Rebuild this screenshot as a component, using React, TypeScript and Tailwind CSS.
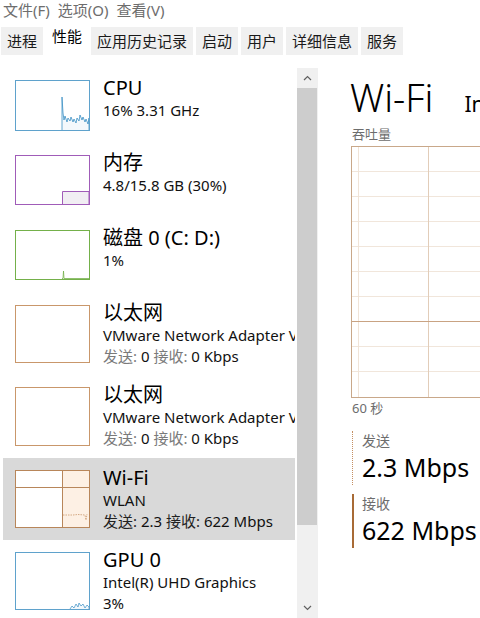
import React from 'react';

type Perf = {
  title: string;
  lines: React.ReactNode[];
  h: number;
  box: string;
  color: string;
  graph: React.ReactNode;
  selected?: boolean;
};

const Label = ({ children, dark }: { children: React.ReactNode; dark?: boolean }) => (
  <span className={dark ? 'text-[#222]' : 'text-[#7a7a7a]'}>{children}</span>
);

// small sparkline box on the left of each resource row
const Thumb = ({ h, color, children }: { h: number; color: string; children?: React.ReactNode }) => (
  <svg width={75} height={h} className="shrink-0 block">
    <rect x={0.5} y={0.5} width={74} height={h - 1} fill="#fff" />
    {children}
    <rect x={0.5} y={0.5} width={74} height={h - 1} fill="none" stroke={color} />
  </svg>
);

const items: Perf[] = [
  {
    title: 'CPU',
    lines: ['16% 3.31 GHz'],
    h: 51,
    box: 'h-[75px]',
    color: '#5fa2cc',
    graph: (
      <polyline
        fill="#f3f8fc"
        stroke="#3b8fc4"
        strokeWidth={0.8}
        points="47,50 47,17 48,33 49,40 50,36 52,42 53,38 55,41 56,37 58,42 59,39 61,43 62,38 64,41 65,35 67,40 68,37 70,42 71,39 73,44 74,38 74,50"
      />
    ),
  },
  {
    title: '内存',
    lines: ['4.8/15.8 GB (30%)'],
    h: 50,
    box: 'h-[75px]',
    color: '#a05cb8',
    graph: <path d="M47.5 50 V36.5 H74 V50 Z" fill="#f1eef3" stroke="#a05cb8" />,
  },
  {
    title: '磁盘 0 (C: D:)',
    lines: ['1%'],
    h: 50,
    box: 'h-[75px]',
    color: '#74b04a',
    graph: <polyline fill="none" stroke="#74b04a" strokeWidth={0.8} points="47,48.5 48,48.5 48.5,41 49,48.5 74,48.5" />,
  },
  {
    title: '以太网',
    lines: [
      'VMware Network Adapter VMnet1',
      <>
        <Label>发送:</Label> 0 <Label>接收:</Label> 0 Kbps
      </>,
    ],
    h: 58,
    box: 'h-[82px]',
    color: '#c9976b',
    graph: null,
  },
  {
    title: '以太网',
    lines: [
      'VMware Network Adapter VMnet8',
      <>
        <Label>发送:</Label> 0 <Label>接收:</Label> 0 Kbps
      </>,
    ],
    h: 59,
    box: 'h-[83px]',
    color: '#c9976b',
    graph: null,
  },
  {
    title: 'Wi-Fi',
    lines: [
      'WLAN',
      <>
        <Label dark>发送:</Label> 2.3 <Label dark>接收:</Label> 622 Mbps
      </>,
    ],
    h: 58,
    box: 'h-[82px]',
    color: '#b8865a',
    selected: true,
    graph: (
      <>
        <rect x={47.5} y={0} width={27} height={58} fill="#fdf0e4" />
        <line x1={47.5} y1={0} x2={47.5} y2={58} stroke="#b8865a" />
        <line x1={0} y1={17.5} x2={75} y2={17.5} stroke="#b8865a" />
        <polyline fill="none" stroke="#c9976b" strokeWidth={0.8} strokeDasharray="1.5 1" points="48,45 58,45 63,44.5 70,45 71,50 72,44" />
      </>
    ),
  },
  {
    title: 'GPU 0',
    lines: ['Intel(R) UHD Graphics', '3%'],
    h: 58,
    box: 'h-[83px]',
    color: '#5fa2cc',
    graph: (
      <polyline
        fill="#f3f8fc"
        stroke="#3b8fc4"
        strokeWidth={0.7}
        points="55,57 57,54 59,56 61,52 63,55 64,51 66,54 68,52 70,56 72,53 74,55 74,57"
      />
    ),
  },
];

const Chevron = ({ up }: { up?: boolean }) => (
  <svg width={9} height={6} className="block">
    <polyline
      points={up ? '1,5 4.5,1.5 8,5' : '1,1 4.5,4.5 8,1'}
      fill="none"
      stroke="#606060"
      strokeWidth={1.2}
    />
  </svg>
);

// throughput chart grid on the right
const ThroughputChart = () => {
  const rows = [25, 50, 75, 100, 125, 150, 200, 225];
  return (
    <svg width={420} height={252} className="block">
      <rect x={0.5} y={0.5} width={419} height={251} fill="#fff" />
      {rows.map((y) => (
        <line key={y} x1={1} y1={y + 0.5} x2={420} y2={y + 0.5} stroke="#f1e6db" />
      ))}
      <line x1={7.5} y1={1} x2={7.5} y2={251} stroke="#f0e4d8" />
      <line x1={77.5} y1={1} x2={77.5} y2={251} stroke="#e2cdb9" />
      <line x1={1} y1={175.5} x2={420} y2={175.5} stroke="#c9a383" />
      <rect x={0.5} y={0.5} width={419} height={251} fill="none" stroke="#c9a88a" />
    </svg>
  );
};

const tabs = ['进程', '性能', '应用历史记录', '启动', '用户', '详细信息', '服务'];

export default function App() {
  return (
    <div className="w-[480px] h-[618px] overflow-hidden bg-white text-black font-['Noto_Sans','Noto_Sans_CJK_SC',sans-serif]">
      {/* menu */}
      <div className="h-[24px] flex gap-[8px] pl-[3px] text-[15px] leading-[20px] text-[#6d6d6d]">
        <span>文件(F)</span>
        <span>选项(O)</span>
        <span>查看(V)</span>
      </div>

      {/* tabs */}
      <div className="h-[31px] flex items-end gap-[3px] pl-[1px] text-[15px] leading-[20px]">
        {tabs.map((t) =>
          t === '性能' ? (
            <div key={t} className="h-[31px] px-[6px] pb-[7px] flex items-center bg-white text-black">
              {t}
            </div>
          ) : (
            <div key={t} className="h-[28px] px-[6px] flex items-center bg-[#f0f0f0] text-[#1a1a1a]">
              {t}
            </div>
          )
        )}
      </div>

      <div className="h-[563px] pt-[13px] flex">
        {/* resource list */}
        <div className="w-[297px] shrink-0 overflow-hidden">
          {items.map((it, i) => (
            <div
              key={i}
              className={`${it.box} ml-[3px] w-[292px] pl-[12px] pt-[12px] flex items-start gap-[13px] overflow-hidden ${it.selected ? 'bg-[#d9d9d9]' : ''}`}
            >
              <Thumb h={it.h} color={it.color}>
                {it.graph}
              </Thumb>
              <div className="-mt-[4px] min-w-0 whitespace-nowrap">
                <div className="text-[20px] leading-[24px]">{it.title}</div>
                {it.lines.map((l, j) => (
                  <div key={j} className="text-[15px] leading-[21px] text-[#111]">
                    {l}
                  </div>
                ))}
              </div>
            </div>
          ))}
        </div>

        {/* scrollbar */}
        <div className="w-[21px] shrink-0 bg-[#f0f0f0] flex flex-col">
          <div className="h-[20px] flex items-center justify-center">
            <Chevron up />
          </div>
          <div className="h-[437px] bg-[#cdcdcd] mr-[1px]" />
          <div className="flex-1" />
          <div className="h-[20px] flex items-center justify-center">
            <Chevron />
          </div>
        </div>

        {/* detail panel */}
        <div className="flex-1 min-w-0 overflow-hidden pl-[32px]">
          <div className="mt-[7px] flex items-baseline whitespace-nowrap">
            <span className="text-[38px] leading-[44px] font-light">Wi-Fi</span>
            <span className="ml-[31px] text-[21px] leading-[28px]">Intel(R) Wi-Fi 6 AX201 160MHz</span>
          </div>
          <div className="mt-[6px] ml-[2px] text-[13px] leading-[18px] text-[#6d6d6d]">吞吐量</div>
          <div className="mt-[3px] ml-[1px]">
            <ThroughputChart />
          </div>
          <div className="ml-[2px] mt-[1px] text-[13px] leading-[18px] text-[#6d6d6d]">60 秒</div>

          <div className="mt-[14px] ml-[2px] border-l border-dotted border-[#c48f63] pl-[9px] whitespace-nowrap">
            <div className="text-[14px] leading-[19px] text-[#6d6d6d]">发送</div>
            <div className="text-[25px] leading-[35px]">2.3 Mbps</div>
          </div>
          <div className="mt-[9px] ml-[2px] border-l-2 border-[#a86b36] pl-[8px] whitespace-nowrap">
            <div className="text-[14px] leading-[19px] text-[#6d6d6d]">接收</div>
            <div className="text-[25px] leading-[35px]">622 Mbps</div>
          </div>
        </div>
      </div>
    </div>
  );
}
